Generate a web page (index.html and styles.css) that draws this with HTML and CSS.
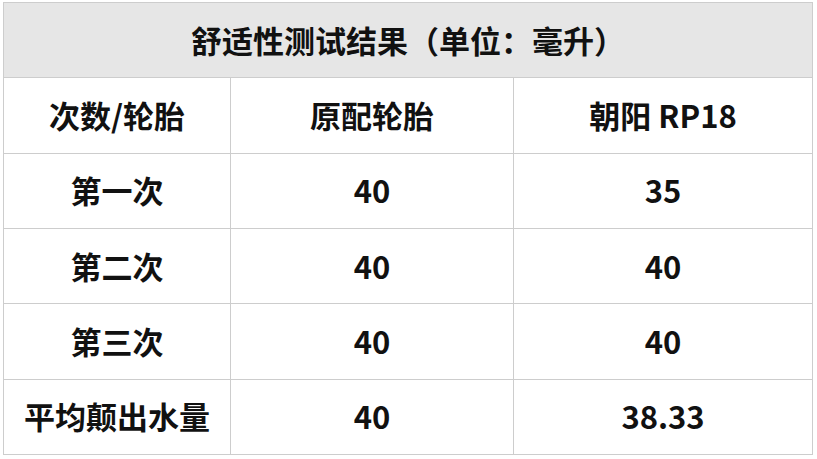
FILE: index.html
```html
<!DOCTYPE html>
<html lang="zh-CN">
<head>
<meta charset="utf-8">
<link rel="stylesheet" href="styles.css">
</head>
<body>
<table class="result">
  <colgroup>
    <col class="c1"><col class="c2"><col class="c3">
  </colgroup>
  <tr class="title"><td colspan="3">舒适性测试结果（单位：毫升）</td></tr>
  <tr><td>次数/轮胎</td><td>原配轮胎</td><td>朝阳 RP18</td></tr>
  <tr><td>第一次</td><td>40</td><td>35</td></tr>
  <tr><td>第二次</td><td>40</td><td>40</td></tr>
  <tr><td>第三次</td><td>40</td><td>40</td></tr>
  <tr><td>平均颠出水量</td><td>40</td><td>38.33</td></tr>
</table>
</body>
</html>
```
FILE: styles.css
```css
html, body {
  margin: 0;
  padding: 0;
  background: #ffffff;
}
body {
  padding: 2px 0 0 3px;
}
.result {
  border-collapse: collapse;
  table-layout: fixed;
  width: 809px;
  height: 453px;
  font-family: "Noto Sans CJK SC", "Noto Sans", sans-serif;
  font-weight: 700;
  font-size: 31px;
  color: #111;
}
.c1 { width: 227px; }
.c2 { width: 283px; }
.c3 { width: 299px; }
.result td {
  border: 1px solid #cdcdcd;
  text-align: center;
  vertical-align: middle;
  padding: 0 0 2px 0;
  height: 72px;
  line-height: 1;
}
.title td {
  background: #e6e6e6;
}
```
